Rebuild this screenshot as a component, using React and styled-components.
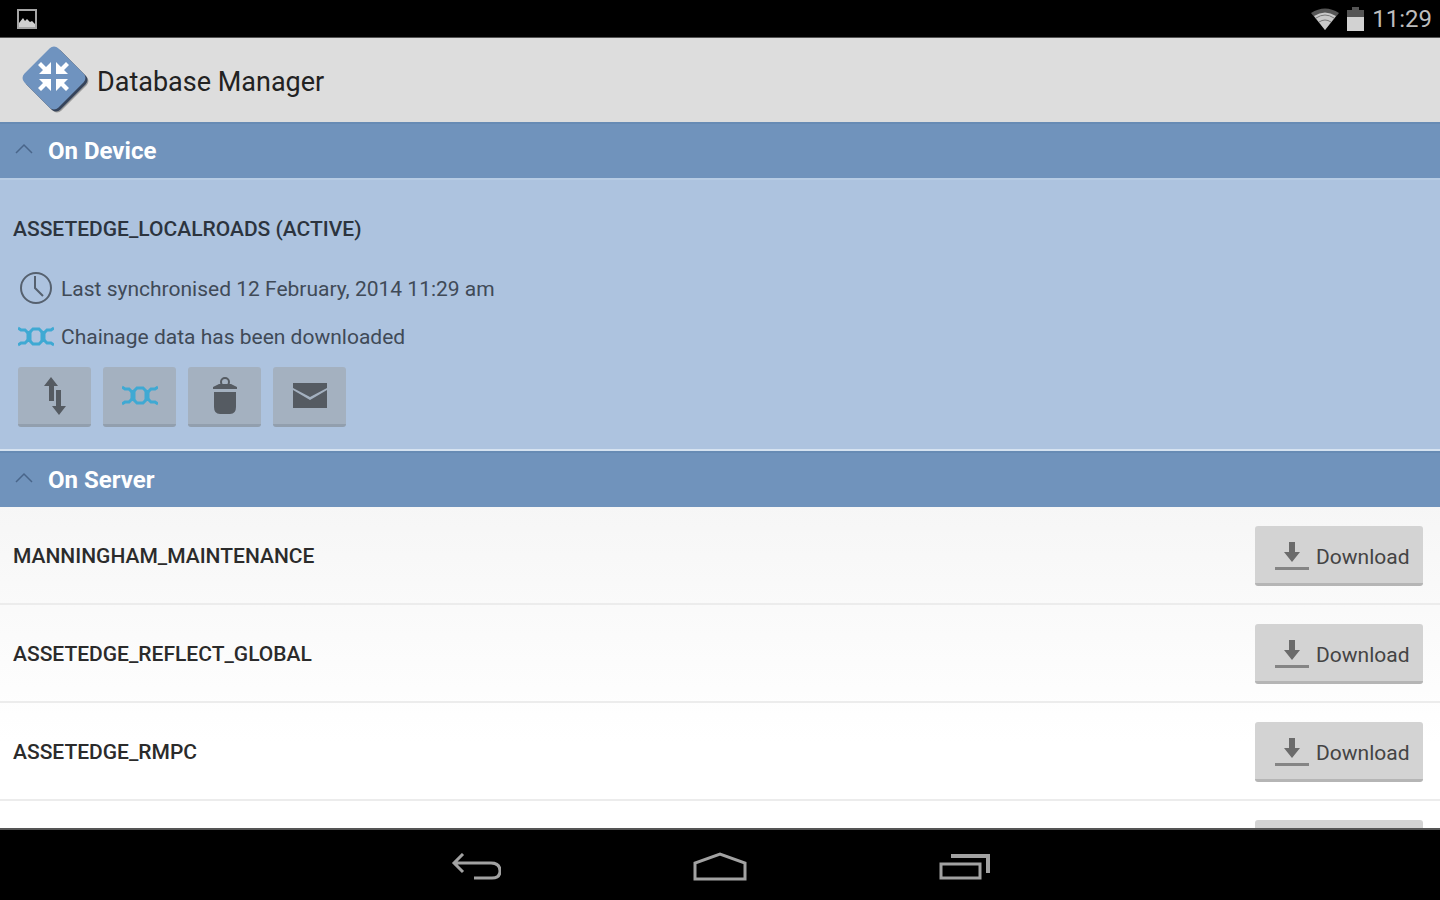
import React from 'react'
import styled, { createGlobalStyle } from 'styled-components'

const GlobalStyle = createGlobalStyle`
  * {
    box-sizing: border-box;
  }

  body {
    margin: 0;
    background: #000;
    font-family: Roboto, "Liberation Sans", sans-serif;
  }
`

const Screen = styled.div`
  display: flex;
  flex-direction: column;
  height: 100vh;
  overflow: hidden;
`

const StatusBar = styled.div`
  flex: none;
  display: flex;
  align-items: center;
  justify-content: space-between;
  height: 38px;
  padding: 1px 8px 0 17px;
  background: #000;
  color: #bdbdbd;
  border-bottom: 1px solid #555;
`

const StatusIcons = styled.div`
  display: flex;
  align-items: center;
  gap: 8px;
`

const Clock = styled.time`
  font-size: 24px;
  line-height: 36px;
`

const TitleBar = styled.header`
  flex: none;
  display: flex;
  align-items: center;
  gap: 7px;
  height: 84px;
  padding: 0 20px;
  background: #dddddd;
  color: #222;
`

const Title = styled.h1`
  margin: 0;
  padding-top: 4px;
  font-size: 27px;
  line-height: 36px;
  font-weight: 400;
`

const Content = styled.main`
  flex: 1;
  min-height: 0;
  overflow: hidden;
  background: linear-gradient(#f6f6f6 380px, #fff 620px);
`

const SectionHeader = styled.button`
  display: flex;
  align-items: center;
  gap: 15px;
  width: 100%;
  height: 56px;
  padding: 0 15px;
  border: 0;
  border-top: 2px solid #678bb4;
  background: #7093bc;
  color: #fff;
  font-family: inherit;
  font-size: 24px;
  line-height: 32px;
  font-weight: 700;
  text-align: left;
`

const DevicePanel = styled.section`
  height: 273px;
  padding: 35px 13px 0;
  border-top: 2px solid #b7cce4;
  border-bottom: 2px solid #d5e2f0;
  background: #adc3df;
`

const DatabaseName = styled.h2`
  margin: 0;
  color: ${props => props.$active ? '#2c343e' : '#2b2b2b'};
  font-size: 21px;
  line-height: 28px;
  font-weight: 500;
`

const InfoList = styled.div`
  padding: 22px 5px 0;
`

const Info = styled.p`
  display: flex;
  align-items: center;
  gap: 7px;
  height: 48px;
  margin: 0;
  color: #404a57;
  font-size: 21px;
  line-height: 28px;
`

const Actions = styled.div`
  display: flex;
  gap: 12px;
  padding: 6px 5px 0;
`

const ActionButton = styled.button`
  display: flex;
  align-items: center;
  justify-content: center;
  width: 73px;
  height: 60px;
  padding: 0;
  border: 0;
  border-bottom: 3px solid #929fae;
  border-radius: 3px;
  background: #a4b1c0;
  color: #555b62;
`

const ServerList = styled.ul`
  margin: 0;
  padding: 0;
  list-style: none;
`

const ServerRow = styled.li`
  display: flex;
  align-items: center;
  justify-content: space-between;
  height: 98px;
  padding: 2px 17px 0 13px;
  border-bottom: 2px solid #ececec;
`

const DownloadButton = styled.button`
  display: flex;
  align-items: center;
  gap: 7px;
  height: 60px;
  width: 168px;
  padding: 4px 0 0 20px;
  border: 0;
  border-bottom: 3px solid #b5b5b5;
  border-radius: 3px;
  background: #d3d3d3;
  color: #444;
  font-family: inherit;
  font-size: 21px;
  line-height: 28px;
`

const NavBar = styled.nav`
  flex: none;
  display: flex;
  align-items: center;
  justify-content: center;
  gap: 164px;
  height: 72px;
  padding-top: 3px;
  border-top: 2px solid #555;
  background: #000;
`

const NavButton = styled.button`
  display: flex;
  align-items: center;
  justify-content: center;
  width: 80px;
  height: 60px;
  padding: 0;
  border: 0;
  background: none;
  color: #a2a2a2;
`

const PictureIcon = () => (
  <svg width="20" height="20" viewBox="0 0 20 20">
    <rect x="1" y="1" width="18" height="18" fill="none" stroke="#a5a5a5" strokeWidth="2" />
    <path d="M2 18v-4l4-5 2 3 2-2 3 3 2-1 3 3v3z" fill="#d0d0d0" />
  </svg>
)

const WifiIcon = () => (
  <svg width="28" height="22" viewBox="0 0 28 22">
    <path d="M0 5Q14-4 28 5L14 22z" fill="#555" />
    <path d="M3 8Q14 1 25 8L14 22z" fill="#c8c8c8" />
    <path d="M5 10Q14 4 23 10M8 14Q14 10 20 14" fill="none" stroke="#777" strokeWidth="1" />
  </svg>
)

const BatteryIcon = () => (
  <svg width="17" height="24" viewBox="0 0 17 24">
    <path d="M5 0h7v3h5v8H0V3h5z" fill="#555" />
    <path d="M0 10h17v14H0z" fill="#d2d2d2" />
  </svg>
)

const Logo = () => (
  <svg width="70" height="72" viewBox="0 0 70 72">
    <rect x="13" y="13" width="48" height="48" rx="6" transform="rotate(45 37 37)" fill="#9a9a9a" />
    <rect x="12" y="12" width="48" height="48" rx="6" transform="rotate(45 36 36)" fill="#35435a" />
    <rect x="10" y="10" width="48" height="48" rx="6" transform="rotate(45 34 34)" fill="#6f93bf" />
    <g fill="#fff">
      <path d="M31 30H19l4-4-5-5 3-3 5 5 5-5z" />
      <path d="M36 30h12l-4-4 5-5-3-3-5 5-5-5z" />
      <path d="M31 35H19l4 4-5 5 3 3 5-5 5 5z" />
      <path d="M36 35h12l-4 4 5 5-3 3-5-5-5 5z" />
    </g>
  </svg>
)

const Chevron = () => (
  <svg width="18" height="16" viewBox="0 0 18 16">
    <path d="M1 10L9 2l8 8" fill="none" stroke="#49658a" strokeWidth="1.5" />
  </svg>
)

const ClockIcon = () => (
  <svg width="36" height="36" viewBox="0 0 36 36" fill="none" stroke="#56616f" strokeWidth="2">
    <circle cx="18" cy="17" r="15" />
    <path d="M17 5v12l8 8" />
  </svg>
)

const ChainIcon = () => (
  <svg width="36" height="22" viewBox="0 0 36 22" fill="none" stroke="#3fa9d3">
    <path d="M0 2l3 2h4l4 4M0 19l3-2h4l4-4M36 2l-3 2h-4l-4 4M36 19l-3-2h-4l-4-4M11 7l4-4h6l4 4M11 14l4 4h6l4-4" strokeWidth="3" />
    <path d="M11 5v11M25 5v11" strokeWidth="5" />
  </svg>
)

const SyncIcon = () => (
  <svg width="24" height="38" viewBox="0 0 24 38" fill="currentColor">
    <path d="M8 0l7 9h-4v15H6V9H1zM16 38l-7-9h4V13h5v16h5z" />
  </svg>
)

const TrashIcon = () => (
  <svg width="26" height="38" viewBox="0 0 26 38">
    <circle cx="13" cy="5" r="4" fill="none" stroke="currentColor" strokeWidth="2" />
    <path d="M1 12v-2l6-3h12l6 3v2zM2 15h22v15q0 7-6 7H8q-6 0-6-7z" fill="currentColor" />
  </svg>
)

const MailIcon = () => (
  <svg width="34" height="28" viewBox="0 0 34 28" fill="currentColor">
    <path d="M0 1h34v5L17 15 0 6zM0 8l17 10L34 8v18H0z" />
  </svg>
)

const DownloadIcon = () => (
  <svg width="34" height="30" viewBox="0 0 34 30">
    <path d="M14 0h6v10h5l-8 10-8-10h5z" fill="#6b6b6b" />
    <path d="M0 25h34v3H0z" fill="#858585" />
  </svg>
)

const BackIcon = () => (
  <svg width="50" height="28" viewBox="0 0 50 28" fill="none" stroke="currentColor" strokeWidth="3">
    <path d="M12 1L3 10l9 9M3 10h37q9 0 9 8 0 7-8 7H23" />
  </svg>
)

const HomeIcon = () => (
  <svg width="54" height="30" viewBox="0 0 54 30" fill="none" stroke="currentColor" strokeWidth="3">
    <path d="M2 27V11l25-9 25 9v16z" />
  </svg>
)

const RecentIcon = () => (
  <svg width="52" height="28" viewBox="0 0 52 28" fill="none" stroke="currentColor">
    <path d="M3 11h39v14H3z" strokeWidth="3" />
    <path d="M13 3h37v17" strokeWidth="4" />
  </svg>
)

const databases = ['MANNINGHAM_MAINTENANCE', 'ASSETEDGE_REFLECT_GLOBAL', 'ASSETEDGE_RMPC', '']

export default function App() {
  return (
    <Screen>
      <GlobalStyle />
      <StatusBar>
        <PictureIcon />
        <StatusIcons>
          <WifiIcon />
          <BatteryIcon />
          <Clock>11:29</Clock>
        </StatusIcons>
      </StatusBar>
      <TitleBar>
        <Logo />
        <Title>Database Manager</Title>
      </TitleBar>
      <Content>
        <SectionHeader aria-expanded="true">
          <Chevron />
          On Device
        </SectionHeader>
        <DevicePanel>
          <DatabaseName $active>ASSETEDGE_LOCALROADS (ACTIVE)</DatabaseName>
          <InfoList>
            <Info>
              <ClockIcon />
              Last synchronised 12 February, 2014 11:29 am
            </Info>
            <Info>
              <ChainIcon />
              Chainage data has been downloaded
            </Info>
          </InfoList>
          <Actions>
            <ActionButton aria-label="Synchronise"><SyncIcon /></ActionButton>
            <ActionButton aria-label="Chainage"><ChainIcon /></ActionButton>
            <ActionButton aria-label="Delete"><TrashIcon /></ActionButton>
            <ActionButton aria-label="Email"><MailIcon /></ActionButton>
          </Actions>
        </DevicePanel>
        <SectionHeader aria-expanded="true">
          <Chevron />
          On Server
        </SectionHeader>
        <ServerList>
          {databases.map((name, index) => (
            <ServerRow key={index}>
              <DatabaseName>{name}</DatabaseName>
              <DownloadButton aria-label="Download">
                <DownloadIcon />
                {name && 'Download'}
              </DownloadButton>
            </ServerRow>
          ))}
        </ServerList>
      </Content>
      <NavBar>
        <NavButton aria-label="Back"><BackIcon /></NavButton>
        <NavButton aria-label="Home"><HomeIcon /></NavButton>
        <NavButton aria-label="Recent apps"><RecentIcon /></NavButton>
      </NavBar>
    </Screen>
  )
}
